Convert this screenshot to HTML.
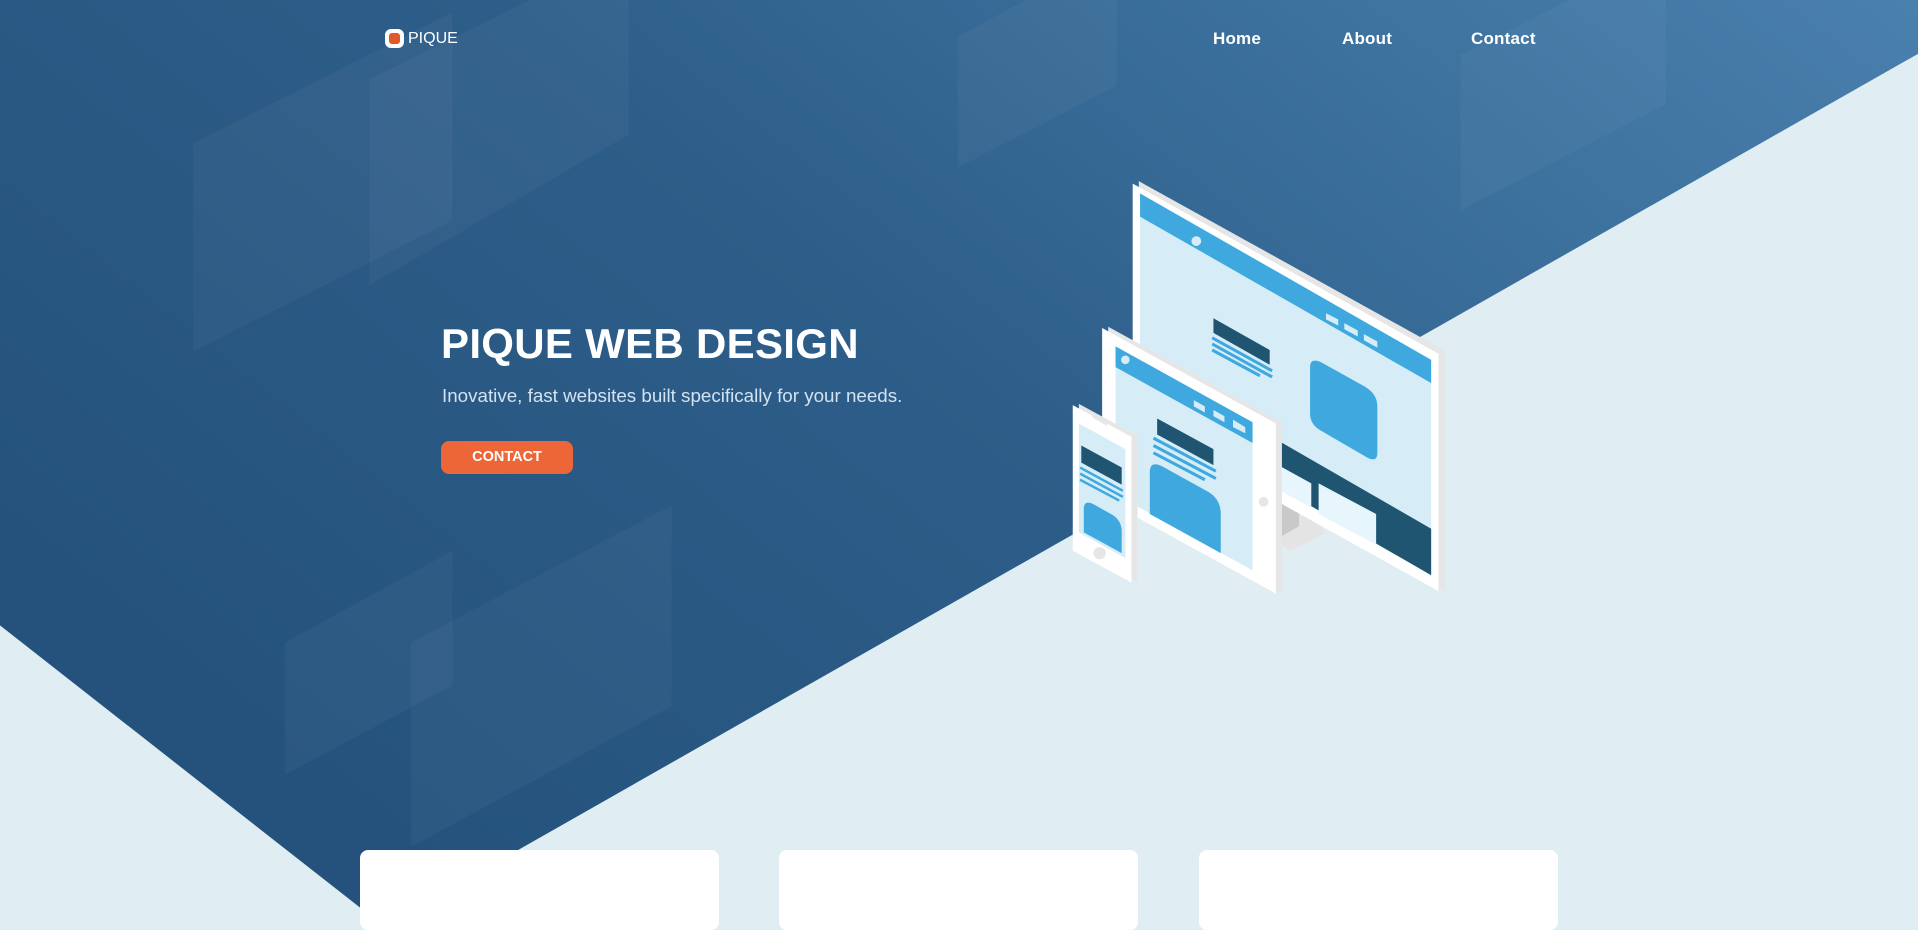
<!DOCTYPE html>
<html><head><meta charset="utf-8"><style>
html,body{margin:0;padding:0;width:1918px;height:913px;overflow:hidden;background:#e0eef4;font-family:"Liberation Sans",sans-serif}
svg.bg{position:absolute;left:0;top:0;width:1918px;height:913px}
.abs{position:absolute;color:#fff;white-space:nowrap}
.logo{left:385px;top:29px;width:19px;height:19px;background:#fff;border-radius:6px}
.logo:after{content:"";position:absolute;left:4px;top:4px;width:11px;height:11px;background:#e0582c;border-radius:3px}
.nav{top:29px;font-size:17px;font-weight:bold;letter-spacing:0.2px}
.card{position:absolute;top:850px;width:359px;height:80px;background:#fff;border-radius:8px}
</style></head><body>
<svg class="bg" viewBox="0 0 1568 746" preserveAspectRatio="none">
<defs><linearGradient id="g" x1="0" y1="0.6" x2="1" y2="0">
<stop offset="0" stop-color="#24527c"/><stop offset="0.45" stop-color="#2d5e89"/><stop offset="1" stop-color="#4a80ae"/></linearGradient></defs>
<polygon points="0,0 1568,0 1568,44 333,746 300,746 0,511" fill="url(#g)"/>
<g fill="#fff" fill-opacity="0.035">
<polygon points="158,117 370,10 370,180 158,287"/>
<polygon points="302,65 514,-40 514,110 302,233"/>
<polygon points="783,30 913,-40 913,70 783,137"/>
<polygon points="1194,45 1362,-40 1362,85 1194,172"/>
<polygon points="233,525 370,450 370,560 233,633"/>
<polygon points="336,525 549,413 549,577 336,692"/>
</g>
<polygon points="1045,410 1065,400 1083,436 1055,450 1045,444" fill="#e4e4e4"/>
<polygon points="1048,408 1062,400 1062,430 1048,438" fill="#c9c9c9"/>
<polygon points="931,148 1182,287 1182,483 931,344" fill="#e6e6e6"/>
<polygon points="926,150 1176,289 1176,483 926,344" fill="#fff"/>
<polygon points="932,158 1170,294 1170,470 932,334" fill="#d6edf7"/>
<polygon points="932,158 1170,294 1170,313 932,177" fill="#3fa9df"/>
<circle cx="978" cy="197" r="4" fill="#d6edf7"/>
<g fill="#d6edf7"><polygon points="1084,256 1094,261 1094,266 1084,261"/><polygon points="1099,264 1110,270 1110,275 1099,269"/><polygon points="1115,273 1126,279 1126,284 1115,278"/></g>
<polygon points="1045,360 1170,432 1170,470 1045,398" fill="#1f5570"/>
<polygon points="1078,395 1125,420 1125,445 1078,420" fill="#e6f6fc"/>
<polygon points="1045,380 1072,395 1072,415 1045,400" fill="#e6f6fc"/>
<polygon points="992,260 1038,286 1038,298 992,272" fill="#1f5570"/>
<g stroke="#3fa9df" stroke-width="2.5"><line x1="991" y1="276" x2="1040" y2="303"/><line x1="991" y1="281" x2="1040" y2="308"/><line x1="991" y1="286" x2="1030" y2="307"/></g>
<path d="M1071,300 Q1071,292 1080,296 L1116,316 Q1126,322 1126,332 L1126,370 Q1126,378 1118,374 L1080,352 Q1071,347 1071,338 Z" fill="#3fa9df"/>
<polygon points="906,267 1048,345 1048,485 906,407" fill="#e6e6e6"/>
<polygon points="901,268 1043,346 1043,485 901,407" fill="#fff"/>
<polygon points="912,283 1024,345 1024,466 912,404" fill="#d6edf7"/>
<polygon points="912,283 1024,345 1024,362 912,300" fill="#3fa9df"/>
<circle cx="920" cy="294" r="3.5" fill="#d6edf7"/>
<g fill="#d6edf7"><polygon points="976,327 985,332 985,337 976,332"/><polygon points="992,335 1001,340 1001,345 992,340"/><polygon points="1008,343 1018,349 1018,354 1008,349"/></g>
<circle cx="1033" cy="410" r="4" fill="#e6e6e6"/>
<polygon points="946,342 992,367 992,380 946,355" fill="#1f5570"/>
<g stroke="#3fa9df" stroke-width="2.5"><line x1="943" y1="358" x2="994" y2="385"/><line x1="943" y1="364" x2="994" y2="391"/><line x1="943" y1="370" x2="985" y2="392"/></g>
<path d="M940,386 Q940,376 950,381 L988,402 Q998,408 998,420 L998,452 L940,420 Z" fill="#3fa9df"/>
<polygon points="882,330 930,356 930,476 882,450" fill="#e6e6e6"/>
<polygon points="877,331 925,357 925,476 877,450" fill="#fff"/>
<polygon points="882,346 920,367 920,456 882,435" fill="#d6edf7"/>
<polygon points="893,338 905,345 905,348 893,341" fill="#e6e6e6"/>
<circle cx="899" cy="452" r="5" fill="#e6e6e6"/>
<polygon points="884,364 917,382 917,396 884,378" fill="#1f5570"/>
<g stroke="#3fa9df" stroke-width="2"><line x1="883" y1="382" x2="918" y2="401"/><line x1="883" y1="387" x2="918" y2="406"/><line x1="883" y1="392" x2="915" y2="409"/></g>
<path d="M886,416 Q886,408 894,412 L910,421 Q917,426 917,434 L917,452 L886,435 Z" fill="#3fa9df"/>
</svg>
<div class="abs logo"></div>
<div class="abs" style="left:408px;top:30px;font-size:16px;">PIQUE</div>
<div class="abs nav" style="left:1213px">Home</div>
<div class="abs nav" style="left:1342px">About</div>
<div class="abs nav" style="left:1471px">Contact</div>
<div class="abs" style="left:441px;top:320px;font-size:42px;font-weight:bold;letter-spacing:0.3px">PIQUE WEB DESIGN</div>
<div class="abs" style="left:442px;top:385px;font-size:18.8px;color:#d3e3f1">Inovative, fast websites built specifically for your needs.</div>
<div class="abs" style="left:441px;top:441px;width:132px;height:33px;background:#ec6637;border-radius:8px;font-size:14.5px;line-height:33px;text-align:center;font-weight:bold">CONTACT</div>
<div class="card" style="left:360px"></div>
<div class="card" style="left:779px"></div>
<div class="card" style="left:1199px"></div>
</body></html>
